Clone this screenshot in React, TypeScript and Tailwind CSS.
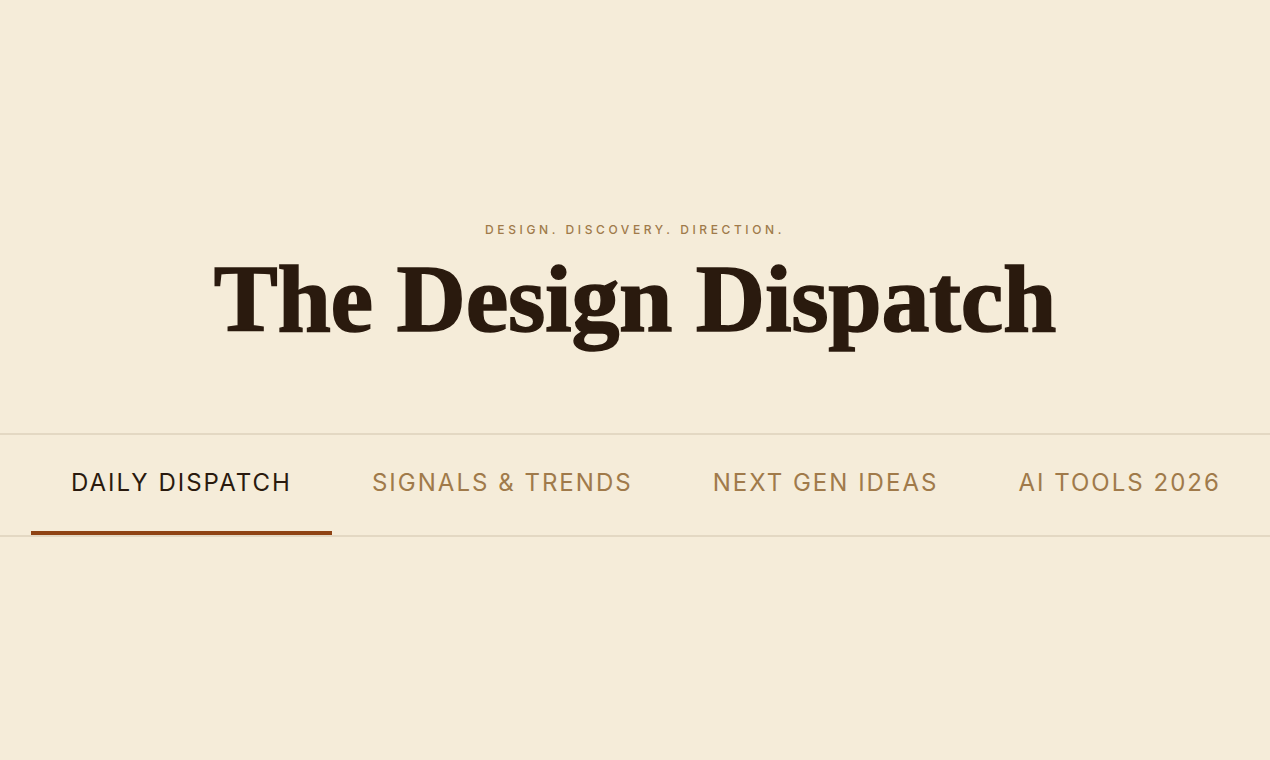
export default function App() {
  const tabs = ["Daily Dispatch", "Signals & Trends", "Next Gen Ideas", "AI Tools 2026"];
  return (
    <div className="min-h-[760px] w-full bg-[#f5ecd9]">
      <header className="flex h-[433px] flex-col items-center pt-[222px]">
        <p className="font-['Inter',sans-serif] text-[12px] leading-[16px] font-medium tracking-[0.3em] text-[#a07a4a] uppercase">
          Design. Discovery. Direction.
        </p>
        <h1 className="mt-[6px] font-['Liberation_Serif',serif] text-[96px] leading-[110px] font-bold tracking-[-0.3px] text-[#2a1a0e] [-webkit-text-stroke:1.5px_#2a1a0e]">
          The Design Dispatch
        </h1>
      </header>
      <nav className="border-y-2 border-[#e3d8c3]">
        <ul className="flex pl-[31px]">
          {tabs.map((t, i) => (
            <li key={t}>
              <button
                className={
                  "flex h-[100px] items-center border-b-4 px-[40px] font-['Inter',sans-serif] text-[24px] font-normal tracking-[0.084em] uppercase " +
                  (i === 0
                    ? "border-[#8f4314] text-[#2a1a0e]"
                    : "border-transparent text-[#a07a4a]")
                }
              >
                {t}
              </button>
            </li>
          ))}
        </ul>
      </nav>
    </div>
  );
}
